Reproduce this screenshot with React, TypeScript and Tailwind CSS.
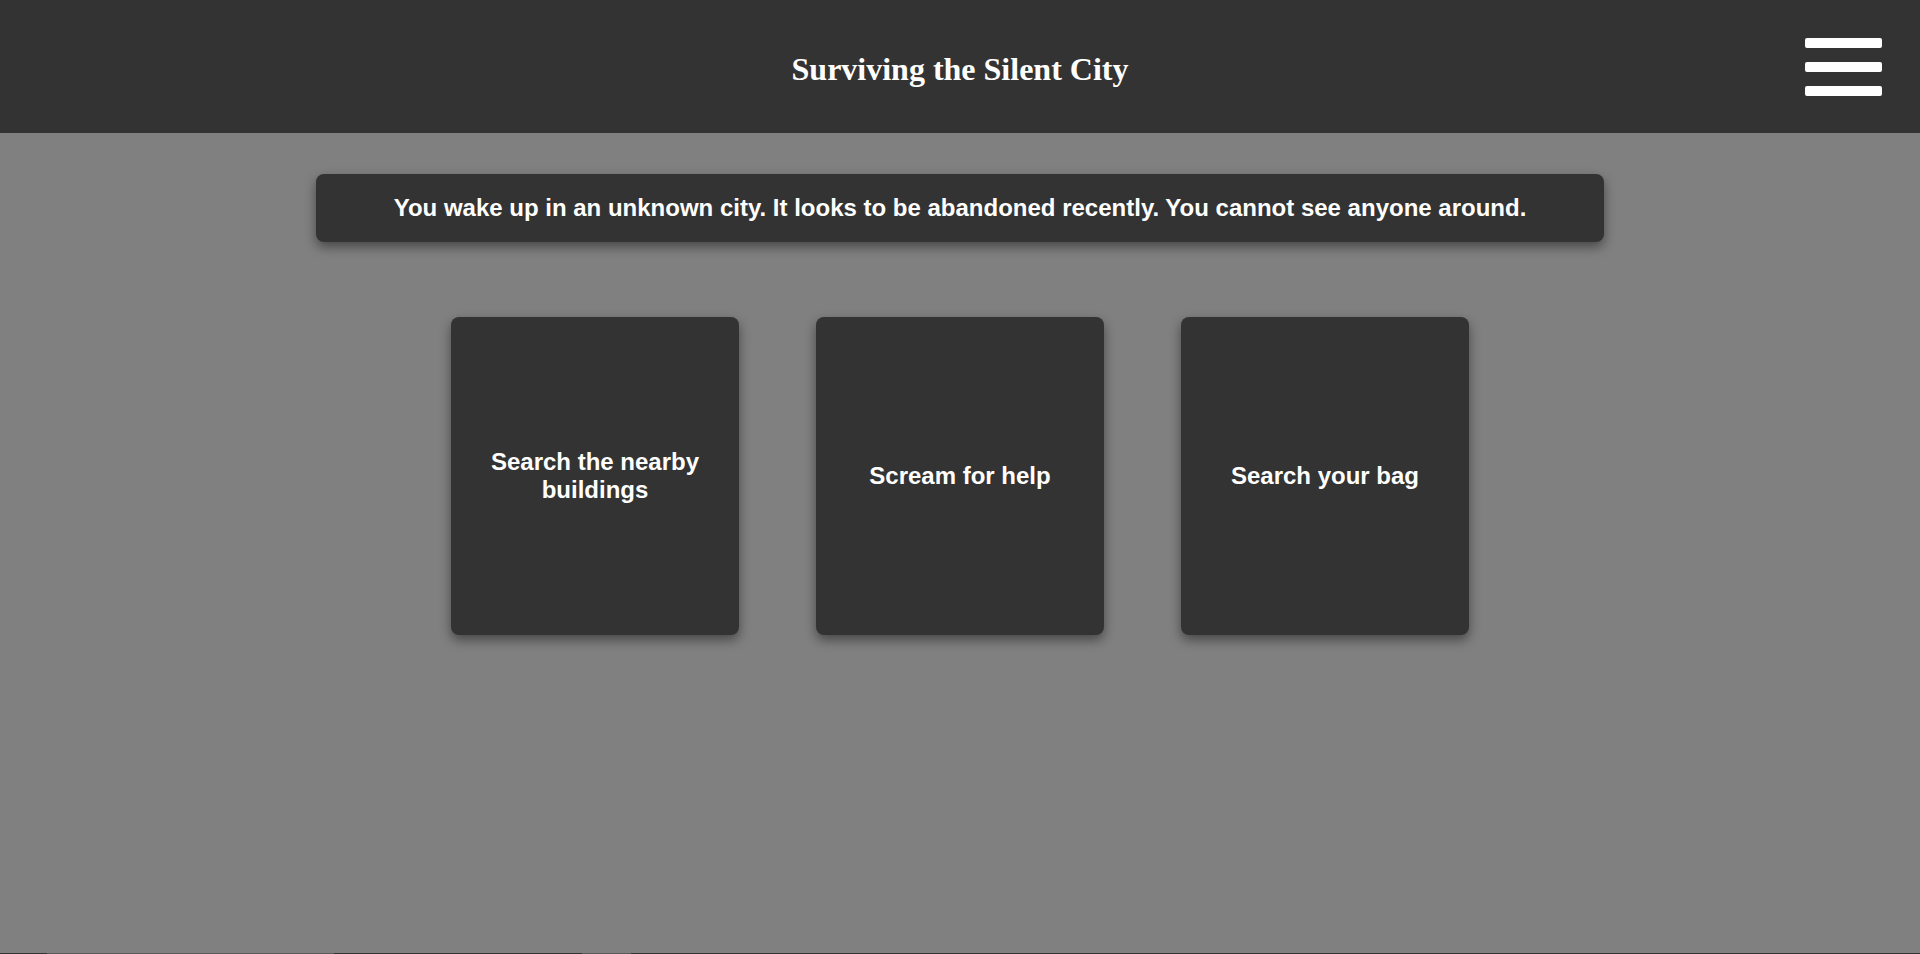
const choices = ["Search the nearby buildings", "Scream for help", "Search your bag"]

export default function App() {
  return (
    <div className="h-screen bg-[#808080] flex flex-col overflow-hidden font-['Liberation_Sans',Arial,sans-serif] text-white">
      <header className="h-[133px] shrink-0 bg-[#333333] grid grid-cols-[1fr_auto_1fr] items-center">
        <div />
        <h1 className="pt-[5px] font-['Liberation_Serif','Times_New_Roman',serif] font-bold text-[32px] leading-[1.15]">
          Surviving the Silent City
        </h1>
        <div className="flex justify-end pr-[38px]">
          <button className="flex flex-col gap-[14px]" aria-label="Menu">
            <span className="block w-[77px] h-[10px] rounded-[2px] bg-white" />
            <span className="block w-[77px] h-[10px] rounded-[2px] bg-white" />
            <span className="block w-[77px] h-[10px] rounded-[2px] bg-white" />
          </button>
        </div>
      </header>

      <main className="flex flex-col items-center">
        <div className="mt-[41px] w-[1288px] rounded-lg bg-[#333333] py-5 px-5 text-center text-[24px] leading-[1.15] font-bold shadow-[0_5px_12px_rgba(0,0,0,0.45)]">
          You wake up in an unknown city. It looks to be abandoned recently. You cannot see anyone around.
        </div>

        <div className="mt-[75px] flex gap-[77px]">
          {choices.map((choice) => (
            <button
              key={choice}
              className="w-[288px] h-[318px] rounded-lg bg-[#333333] flex items-center justify-center px-5 text-center text-[24px] leading-[28px] font-bold shadow-[0_5px_12px_rgba(0,0,0,0.45)]"
            >
              {choice}
            </button>
          ))}
        </div>
      </main>

      <div className="mt-auto h-px flex shrink-0">
        <div className="w-[47px] bg-[#333333]" />
        <div className="w-[287px] bg-[#5a5a5a]" />
        <div className="w-[248px] bg-[#333333]" />
        <div className="w-[49px] bg-[#5a5a5a]" />
        <div className="flex-1 bg-[#333333]" />
      </div>
    </div>
  )
}
